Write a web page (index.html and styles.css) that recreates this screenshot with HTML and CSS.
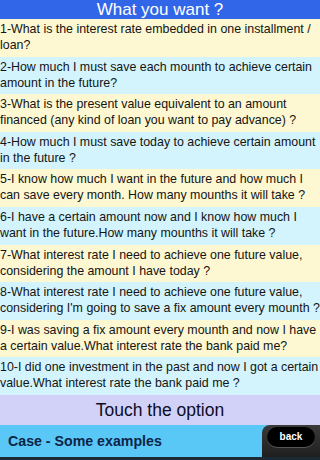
FILE: index.html
```html
<!DOCTYPE html>
<html>
<head>
<meta charset="utf-8">
<link rel="stylesheet" href="styles.css">
</head>
<body>
<div class="screen">
  <div class="header">What you want ?</div>
  <ul class="list">
    <li class="row y">1-What is the interest rate embedded in one installment / loan?</li>
    <li class="row c">2-How much I must save each mounth to achieve certain amount in the future?</li>
    <li class="row y">3-What is the present value equivalent to an amount financed (any kind of loan you want to pay advance) ?</li>
    <li class="row c">4-How much I must save today to achieve certain amount in the future ?</li>
    <li class="row y">5-I know how much I want in the future and how much I can save every month. How many mounths it will take ?</li>
    <li class="row c">6-I have a certain amount now and I know how much I want in the future.How many mounths it will take ?</li>
    <li class="row y">7-What interest rate I need to achieve one future value, considering the amount I have today ?</li>
    <li class="row c">8-What interest rate I need to achieve one future value, considering I'm going to save a fix amount every mounth ?</li>
    <li class="row y">9-I was saving a fix amount every mounth and now I have a certain value.What interest rate the bank paid me?</li>
    <li class="row c">10-I did one investment in the past and now I got a certain value.What interest rate the bank paid me ?</li>
  </ul>
  <div class="touch">Touch the option</div>
  <div class="bottom">
    <div class="case">Case - Some examples</div>
    <div class="backpanel"><span class="back">back</span></div>
  </div>
</div>
</body>
</html>
```
FILE: styles.css
```css
html, body {
  margin: 0;
  padding: 0;
  background: #fff;
}
.screen {
  width: 320px;
  height: 460px;
  display: flex;
  flex-direction: column;
  font-family: "Liberation Sans", Arial, sans-serif;
  overflow: hidden;
}
.header {
  height: 19px;
  background: #3166e9;
  color: #fff;
  font-size: 17px;
  line-height: 19px;
  text-align: center;
}
.list {
  list-style: none;
  margin: 0;
  padding: 0;
}
.row {
  height: 37.6px;
  box-sizing: border-box;
  padding: 2px 0 0 0;
  font-size: 12.4px;
  line-height: 16px;
  color: #141414;
}
.row.y { background: #fdf8d2; }
.row.c { background: #d3f4fc; }
.touch {
  height: 30px;
  background: #d2d2f8;
  color: #0c0c24;
  font-size: 17.5px;
  line-height: 31px;
  text-align: center;
}
.bottom {
  flex: 1;
  display: flex;
  background: #5ac8f7;
  border-bottom: 3px solid #1b2a33;
}
.case {
  flex: 1;
  padding-left: 8px;
  font-size: 14.2px;
  font-weight: bold;
  color: #0d2548;
  line-height: 32px;
}
.backpanel {
  width: 58px;
  background: linear-gradient(#3a3a3a, #1f1f1f);
  border-top-left-radius: 8px;
  display: flex;
  justify-content: center;
  padding-top: 2px;
}
.back {
  width: 48px;
  height: 20px;
  background: #000;
  border-radius: 10px;
  color: #fff;
  font-size: 10px;
  font-weight: bold;
  line-height: 20px;
  text-align: center;
  box-shadow: 0 1px 0 #555;
}
```
